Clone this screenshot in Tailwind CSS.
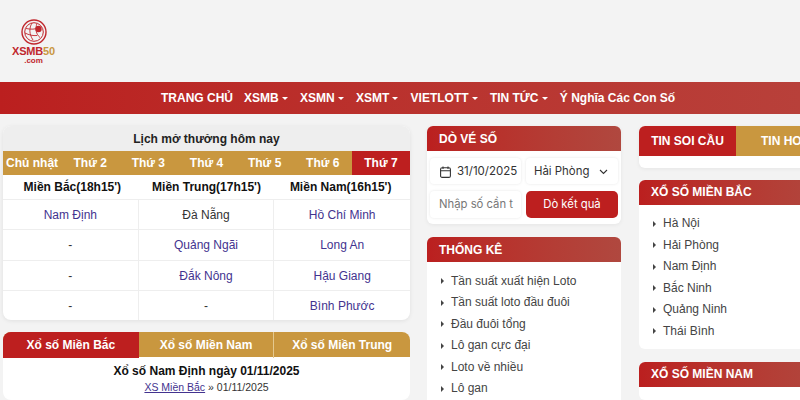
<!DOCTYPE html>
<html lang="en">
<head>
  <meta charset="UTF-8">
  <title>XSMB50</title>
  <script src="https://cdn.jsdelivr.net/npm/@tailwindcss/browser@4"></script>
</head>
<body class="w-[800px] h-[400px] overflow-hidden bg-[#f3f3f3] font-['Liberation_Sans',Arial,sans-serif] text-[#222]">
  <!-- logo -->
  <header class="h-[82px] pl-[11px] pt-[19px]">
    <div class="w-[45px] flex flex-col items-center">
      <svg width="26" height="26" viewBox="0 0 26 26" fill="none" stroke="#c0272d">
        <circle cx="13" cy="13" r="12" stroke-width="1.4"/>
        <circle cx="13" cy="13" r="9.3" stroke-width="1"/>
        <path d="M5 9.5c5 1 9 1 14-1M4 14c4 2 8 3 12 2.500M11 4c-3 5-3 11 1 17M16 4.500c-2 5-1 11 3 14" stroke-width=".9"/>
        <circle cx="17.500" cy="10" r="3.200" fill="#c0272d" stroke="none"/>
      </svg>
      <div class="mt-[1px] text-[11px] leading-[11px] font-bold whitespace-nowrap tracking-[-.2px] text-[#c0272d]">XSMB<span class="text-[#c9973f]">50</span></div>
      <div class="text-[8px] leading-[7px] font-bold text-[#c0272d]">.com</div>
    </div>
  </header>

  <nav class="h-[32px] bg-gradient-to-r from-[#bb1f1f] to-[#b8403a] flex items-center pl-[161px] gap-[12.3px] text-white text-[12px] font-bold whitespace-nowrap">
    <span class="-mr-[1.3px]">TRANG CHỦ</span>
    <span class="flex items-center gap-[3px]">XSMB <i class="w-0 h-0 border-x-[3px] border-x-transparent border-t-[3px] border-t-white"></i></span>
    <span class="flex items-center gap-[3px]">XSMN <i class="w-0 h-0 border-x-[3px] border-x-transparent border-t-[3px] border-t-white"></i></span>
    <span class="flex items-center gap-[3px]">XSMT <i class="w-0 h-0 border-x-[3px] border-x-transparent border-t-[3px] border-t-white"></i></span>
    <span class="flex items-center gap-[3px]">VIETLOTT <i class="w-0 h-0 border-x-[3px] border-x-transparent border-t-[3px] border-t-white"></i></span>
    <span class="flex items-center gap-[3px]">TIN TỨC <i class="w-0 h-0 border-x-[3px] border-x-transparent border-t-[3px] border-t-white"></i></span>
    <span>Ý Nghĩa Các Con Số</span>
  </nav>

  <main class="flex items-start pt-[12px] pl-[3px]">
    <!-- left column -->
    <div class="w-[407px] shrink-0 flex flex-col gap-[12px]">
      <section class="bg-white rounded-[8px] overflow-hidden shadow-[0_1px_4px_rgba(0,0,0,0.08)]">
        <h2 class="h-[25px] bg-[#eeeeee] flex items-center justify-center text-[12px] font-bold">Lịch mở thưởng hôm nay</h2>
        <div class="h-[24px] grid grid-cols-7 bg-[#c9973f] text-white text-[12px] font-bold text-center leading-[24px]">
          <span>Chủ nhật</span><span>Thứ 2</span><span>Thứ 3</span><span>Thứ 4</span><span>Thứ 5</span><span>Thứ 6</span><span class="bg-[#bd1f1f]">Thứ 7</span>
        </div>
        <div class="h-[24px] grid grid-cols-3 text-[12px] font-bold text-center leading-[24px] text-[#111]">
          <span class="pl-[3px]">Miền Bắc(18h15')</span><span>Miền Trung(17h15')</span><span class="pr-[3px]">Miền Nam(16h15')</span>
        </div>
        <div class="grid grid-cols-3 grid-rows-[30px_31px_30px_30px] text-[12px] text-center leading-[30px] text-[#43338f] [&>span]:border-t [&>span]:border-[#eeeeee] [&>span:not(:nth-child(3n))]:border-r">
          <span>Nam Định</span><span class="text-[#333]">Đà Nẵng</span><span>Hồ Chí Minh</span>
          <span class="text-[#333]">-</span><span>Quảng Ngãi</span><span>Long An</span>
          <span class="text-[#333]">-</span><span>Đắk Nông</span><span>Hậu Giang</span>
          <span class="text-[#333]">-</span><span class="text-[#333]">-</span><span>Bình Phước</span>
        </div>
      </section>
      <section class="bg-white rounded-[8px] overflow-hidden h-[68px]">
        <div class="h-[25px] grid grid-cols-3 bg-[#c9973f] text-white text-[12px] font-bold text-center leading-[26px]">
          <span class="bg-[#bd1f1f]">Xổ số Miền Bắc</span>
          <span class="border-r border-[#e5c98f]">Xổ số Miền Nam</span>
          <span>Xổ số Miền Trung</span>
        </div>
        <h3 class="mt-[7px] text-[12px] leading-[15px] font-bold text-center text-[#111]">Xổ số Nam Định ngày 01/11/2025</h3>
        <p class="mt-[1px] text-[10.5px] leading-[14px] text-center text-[#333]"><a class="underline text-[#43338f]" href="#">XS Miền Bắc</a> » 01/11/2025</p>
      </section>
    </div>

    <!-- middle column -->
    <div class="w-[194px] shrink-0 ml-[17px] flex flex-col gap-[13px]">
      <section class="bg-white rounded-[6px] overflow-hidden shadow-[0_1px_4px_rgba(0,0,0,0.06)] h-[98px]">
        <h2 class="h-[25px] pl-[12px] bg-gradient-to-r from-[#bb1f1f] to-[#b0483f] text-white text-[12px] font-bold leading-[26px]">DÒ VÉ SỐ</h2>
        <div class="grid grid-cols-[91px_92px] gap-x-[5px] gap-y-[7px] pl-[3px] pt-[7px] text-[12px]">
          <div class="h-[26px] rounded-[4px] flex items-center gap-[6px] pl-[10px] pt-[1px] shadow-[0_0_3px_rgba(0,0,0,0.1)] whitespace-nowrap font-['Inter',sans-serif] text-[#333]">
            <svg class="shrink-0" width="11" height="12" viewBox="0 0 11 12" fill="none" stroke="#333" stroke-width="1.1"><rect x=".6" y="1.800" width="9.800" height="9.600" rx="1.500"/><path d="M.6 4.800h9.800M3 .5v2.500M8 .5v2.500"/></svg>
            <span class="text-[11.500px]">31/10/2025</span>
          </div>
          <div class="h-[26px] rounded-[4px] flex items-center justify-between pl-[8px] pr-[10px] pt-[1px] shadow-[0_0_3px_rgba(0,0,0,0.1)] whitespace-nowrap font-['Inter',sans-serif] text-[#333]">
            <span class="text-[11.400px]">Hải Phòng</span>
            <svg width="9" height="6" viewBox="0 0 9 6" fill="none" stroke="#333" stroke-width="1.1"><path d="M1 1l3.500 3.500L8 1"/></svg>
          </div>
          <div class="h-[27px] rounded-[4px] overflow-hidden pl-[9px] pr-[8px] leading-[27px] shadow-[0_0_3px_rgba(0,0,0,0.1)] whitespace-nowrap font-['Inter',sans-serif] text-[#777] text-[11.300px]">Nhập số cần t</div>
          <button class="h-[27px] rounded-[5px] bg-[#bd1f1f] text-white text-[11.300px] font-['Inter',sans-serif]">Dò kết quả</button>
        </div>
      </section>
      <section class="bg-white rounded-[6px] overflow-hidden h-[200px]">
        <h2 class="h-[25px] pl-[12px] bg-gradient-to-r from-[#bb1f1f] to-[#b0483f] text-white text-[12px] font-bold leading-[26px]">THỐNG KÊ</h2>
        <ul class="pl-[14px] pt-[8.500px] text-[12px] leading-[21.500px] text-[#444] [&>li]:flex [&>li]:items-center [&>li]:gap-[7px]">
          <li><i class="w-0 h-0 border-y-[3px] border-y-transparent border-l-[3px] border-l-[#444]"></i>Tần suất xuất hiện Loto</li>
          <li><i class="w-0 h-0 border-y-[3px] border-y-transparent border-l-[3px] border-l-[#444]"></i>Tần suất loto đầu đuôi</li>
          <li><i class="w-0 h-0 border-y-[3px] border-y-transparent border-l-[3px] border-l-[#444]"></i>Đầu đuôi tổng</li>
          <li><i class="w-0 h-0 border-y-[3px] border-y-transparent border-l-[3px] border-l-[#444]"></i>Lô gan cực đại</li>
          <li><i class="w-0 h-0 border-y-[3px] border-y-transparent border-l-[3px] border-l-[#444]"></i>Loto về nhiều</li>
          <li><i class="w-0 h-0 border-y-[3px] border-y-transparent border-l-[3px] border-l-[#444]"></i>Lô gan</li>
        </ul>
      </section>
    </div>

    <!-- right column -->
    <div class="w-[194px] shrink-0 ml-[18px] flex flex-col">
      <section class="bg-white rounded-[6px] overflow-hidden h-[42px] shadow-[0_1px_4px_rgba(0,0,0,0.06)]">
        <div class="h-[30px] flex text-[12px] font-bold leading-[30px] text-white whitespace-nowrap">
          <span class="w-[97px] bg-[#bd1f1f] text-center">TIN SOI CẦU</span>
          <span class="w-[97px] bg-[#c9973f] pl-[25px]">TIN HOT</span>
        </div>
      </section>
      <section class="mt-[12px] bg-white rounded-[6px] overflow-hidden h-[169px]">
        <h2 class="h-[25px] pl-[12px] bg-gradient-to-r from-[#bb1f1f] to-[#b0483f] text-white text-[12px] font-bold leading-[25px]">XỔ SỐ MIỀN BẮC</h2>
        <ul class="pl-[14px] pt-[8px] text-[12px] leading-[21.500px] text-[#444] [&>li]:flex [&>li]:items-center [&>li]:gap-[7px]">
          <li><i class="w-0 h-0 border-y-[3px] border-y-transparent border-l-[3px] border-l-[#444]"></i>Hà Nội</li>
          <li><i class="w-0 h-0 border-y-[3px] border-y-transparent border-l-[3px] border-l-[#444]"></i>Hải Phòng</li>
          <li><i class="w-0 h-0 border-y-[3px] border-y-transparent border-l-[3px] border-l-[#444]"></i>Nam Định</li>
          <li><i class="w-0 h-0 border-y-[3px] border-y-transparent border-l-[3px] border-l-[#444]"></i>Bắc Ninh</li>
          <li><i class="w-0 h-0 border-y-[3px] border-y-transparent border-l-[3px] border-l-[#444]"></i>Quảng Ninh</li>
          <li><i class="w-0 h-0 border-y-[3px] border-y-transparent border-l-[3px] border-l-[#444]"></i>Thái Bình</li>
        </ul>
      </section>
      <section class="mt-[13px] bg-white rounded-[6px] overflow-hidden h-[38px]">
        <h2 class="h-[25px] pl-[12px] bg-gradient-to-r from-[#bb1f1f] to-[#b0483f] text-white text-[12px] font-bold leading-[25px]">XỔ SỐ MIỀN NAM</h2>
      </section>
    </div>
  </main>
</body>
</html>
